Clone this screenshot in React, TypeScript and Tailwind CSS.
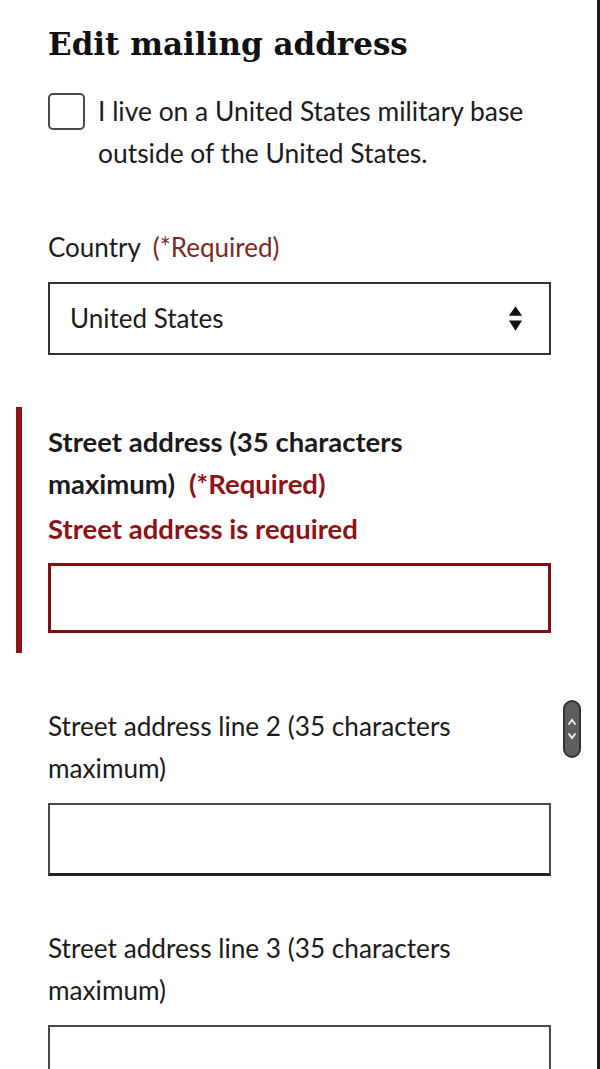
import { useState } from "react";

const body = "font-['Lato','Liberation_Sans',sans-serif]";

function ScrollThumb() {
  return (
    <div className="absolute left-[563px] top-[700px] h-[58px] w-[18px] rounded-full border-2 border-[#333] bg-[#5e5e5e]">
      <svg viewBox="0 0 14 54" className="h-full w-full">
        <path d="M4 22 L7 18 L10 22" fill="none" stroke="#e8e8e8" strokeWidth="2" strokeLinecap="round" />
        <path d="M4 32 L7 36 L10 32" fill="none" stroke="#e8e8e8" strokeWidth="2" strokeLinecap="round" />
      </svg>
    </div>
  );
}

function TextInput({ error = false }: { error?: boolean }) {
  return (
    <input
      type="text"
      className={
        error
          ? "mt-[13px] block h-[70px] w-[503px] border-[3px] border-[#7d1014] bg-white"
          : "mt-[14px] block h-[73px] w-[503px] border-2 border-[#4a4a4a] border-b-[3px] border-b-[#222] bg-white"
      }
    />
  );
}

export default function App() {
  const [military, setMilitary] = useState(false);

  return (
    <div className={`relative min-h-[1069px] w-[600px] overflow-hidden border-r-[3px] border-[#1e1e1e] bg-white text-[#1b1b1b] ${body}`}>
      <div className="pl-[16px] pt-[26px]">
        <h1 className="ml-[32px] font-['DejaVu_Serif',serif] text-[31px] font-bold leading-[36px] text-[#111]">
          Edit mailing address
        </h1>

        <label className="ml-[32px] mt-[28px] flex w-[503px] cursor-pointer gap-[13px]">
          <input
            type="checkbox"
            checked={military}
            onChange={(e) => setMilitary(e.target.checked)}
            className="mt-[3px] h-[37px] w-[37px] shrink-0 appearance-none rounded-[5px] border-2 border-[#4a4a4a] bg-white"
          />
          <span className="text-[26.4px] leading-[42px]">
            I live on a United States military base outside of the United States.
          </span>
        </label>

        <div className="ml-[32px] mt-[52px]">
          <div className="text-[26px] leading-[42px]">
            <span>Country</span>
            <span className="ml-[12px] text-[#7a2b25]">(*Required)</span>
          </div>
          <div className="mt-[14px] flex h-[73px] w-[503px] items-center justify-between border-2 border-[#333] pl-[20px] pr-[26px]">
            <span className="text-[26px]">United States</span>
            <svg viewBox="0 0 16 28" className="h-[27px] w-[15px]">
              <path d="M8 1 L15 11 L1 11 Z" fill="#111" />
              <path d="M1 16 L15 16 L8 27 Z" fill="#111" />
            </svg>
          </div>
        </div>

        <div className="mt-[52px] w-[535px] border-l-[6px] border-[#8b1317] pb-[20px] pl-[26px] pt-[14px]">
          <div className="text-[27.5px] font-bold leading-[42px]">
            <div>Street address (35 characters</div>
            <div>
              <span>maximum)</span>
              <span className="ml-[14px] text-[#8b1317]">(*Required)</span>
            </div>
          </div>
          <div className="mt-[3px] text-[27.5px] font-bold leading-[42px] text-[#8b1317]">
            Street address is required
          </div>
          <TextInput error />
        </div>

        <div className="ml-[32px] mt-[52px]">
          <div className="w-[440px] text-[26.2px] leading-[42px]">
            Street address line 2 (35 characters maximum)
          </div>
          <TextInput />
        </div>

        <div className="ml-[32px] mt-[51px]">
          <div className="w-[440px] text-[26.2px] leading-[42px]">
            Street address line 3 (35 characters maximum)
          </div>
          <TextInput />
        </div>
      </div>

      <ScrollThumb />
    </div>
  );
}
